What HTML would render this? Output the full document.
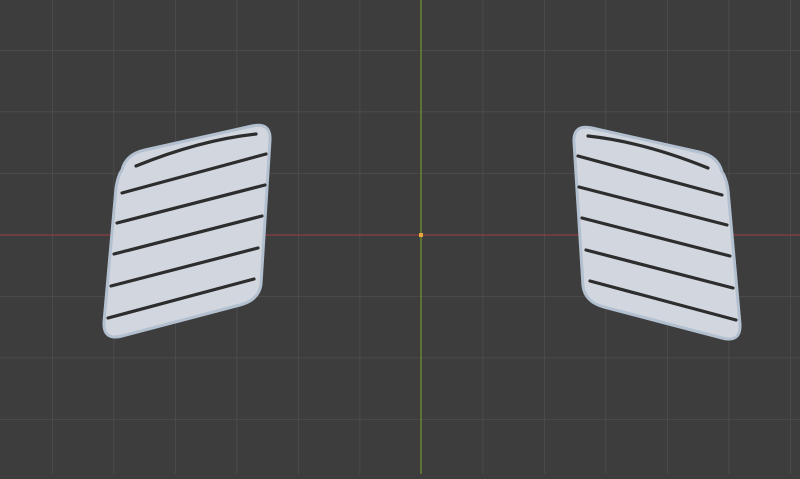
<!DOCTYPE html>
<html><head><style>html,body{margin:0;padding:0;background:#3d3d3d;overflow:hidden}</style></head>
<body>
<svg width="800" height="474" xmlns="http://www.w3.org/2000/svg">
<defs>
<pattern id="g" x="52" y="50" width="61.5" height="61.5" patternUnits="userSpaceOnUse">
<path d="M0 0H61.5M0 0V61.5" stroke="#4e4e4e" stroke-width="1.5" fill="none"/>
</pattern>
</defs>
<rect width="800" height="474" fill="#3d3d3d"/>
<rect width="800" height="474" fill="url(#g)"/>
<line x1="0" y1="235" x2="800" y2="235" stroke="#8a3e45" stroke-width="1.3"/>
<line x1="421" y1="0" x2="421" y2="474" stroke="#6b8e35" stroke-width="1.3"/>
<rect x="419" y="233" width="4" height="4" fill="#e8a53a"/>
<g id="L">
<path d="M122 170 Q126 154 145 150 L252 126 Q271 122 270 140 L261 284 Q259 300 240 305 L122 336 Q103 341 104 322 L116 188 Q118 175 122 170 Z" fill="#d2d6de" stroke="#b3c0d0" stroke-width="3"/>
<g stroke="#2d2d2d" stroke-width="3.2" stroke-linecap="round" fill="none">
<path d="M136 166 Q200 140 256 134"/>
<path d="M122 193 L266 154"/>
<path d="M117 223 L265 185"/>
<path d="M114 254 L262 216"/>
<path d="M111 286 L258 248"/>
<path d="M108 318 L254 279"/>
</g>
</g>
<use href="#L" transform="translate(844,2) scale(-1,1)"/>
</svg>
</body></html>
